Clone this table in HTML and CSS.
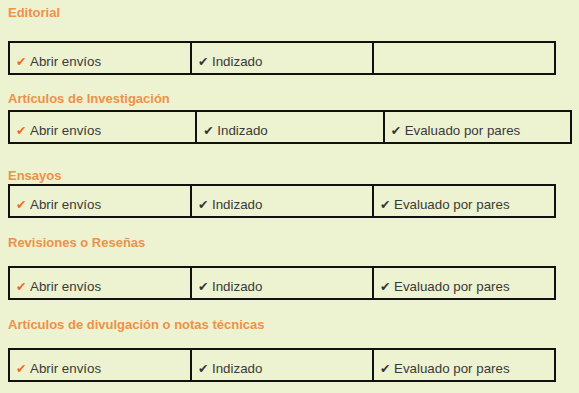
FILE: index.html
```html
<!DOCTYPE html>
<html lang="es">
<head>
<meta charset="utf-8">
<title>Secciones</title>
<link rel="stylesheet" href="styles.css">
</head>
<body>
<div class="sections">
  <section class="section s-editorial">
    <h3 class="section-title">Editorial</h3>
    <table class="policies">
      <tr>
        <td><span class="check check-open">✔</span>Abrir envíos</td>
        <td><span class="check">✔</span>Indizado</td>
        <td></td>
      </tr>
    </table>
  </section>

  <section class="section s-research">
    <h3 class="section-title">Artículos de Investigación</h3>
    <table class="policies policies-wide">
      <tr>
        <td><span class="check check-open">✔</span>Abrir envíos</td>
        <td><span class="check">✔</span>Indizado</td>
        <td><span class="check">✔</span>Evaluado por pares</td>
      </tr>
    </table>
  </section>

  <section class="section s-essays">
    <h3 class="section-title">Ensayos</h3>
    <table class="policies">
      <tr>
        <td><span class="check check-open">✔</span>Abrir envíos</td>
        <td><span class="check">✔</span>Indizado</td>
        <td><span class="check">✔</span>Evaluado por pares</td>
      </tr>
    </table>
  </section>

  <section class="section s-reviews">
    <h3 class="section-title">Revisiones o Reseñas</h3>
    <table class="policies">
      <tr>
        <td><span class="check check-open">✔</span>Abrir envíos</td>
        <td><span class="check">✔</span>Indizado</td>
        <td><span class="check">✔</span>Evaluado por pares</td>
      </tr>
    </table>
  </section>

  <section class="section s-outreach">
    <h3 class="section-title">Artículos de divulgación o notas técnicas</h3>
    <table class="policies">
      <tr>
        <td><span class="check check-open">✔</span>Abrir envíos</td>
        <td><span class="check">✔</span>Indizado</td>
        <td><span class="check">✔</span>Evaluado por pares</td>
      </tr>
    </table>
  </section>
</div>
</body>
</html>
```
FILE: styles.css
```css
html, body {
  margin: 0;
  padding: 0;
  background: #edf2d0;
}

body {
  font-family: "Liberation Sans", Arial, sans-serif;
  color: #3a3a3a;
}

.sections {
  padding: 5px 8px 0;
}

.section-title {
  margin: 0;
  font-size: 13px;
  line-height: 16px;
  font-weight: bold;
  color: #ee9149;
}

.policies {
  width: 548px;
  border-collapse: collapse;
  table-layout: fixed;
  font-size: 13.33px;
  line-height: 15px;
}

.policies-wide {
  width: 564px;
}

.policies td {
  border: 2px solid #111;
  padding: 11px 6px 4px;
  white-space: nowrap;
  height: 15px;
}

.check {
  display: inline-block;
  width: 12px;
  margin-right: 2px;
  font-family: "DejaVu Sans", sans-serif;
  font-size: 12.5px;
  line-height: 0;
  color: #333;
}

.check-open {
  color: #f2691c;
}

/* spacing between each section heading and its table */
.s-editorial .section-title { margin-bottom: 20px; }
.s-research { margin-top: 16px; }
.s-research .section-title { margin-bottom: 3px; }
.s-essays { margin-top: 24px; }
.s-essays .section-title { margin-bottom: 0; }
.s-reviews { margin-top: 17px; }
.s-reviews .section-title { margin-bottom: 15px; }
.s-outreach { margin-top: 17px; }
.s-outreach .section-title { margin-bottom: 15px; }
```
